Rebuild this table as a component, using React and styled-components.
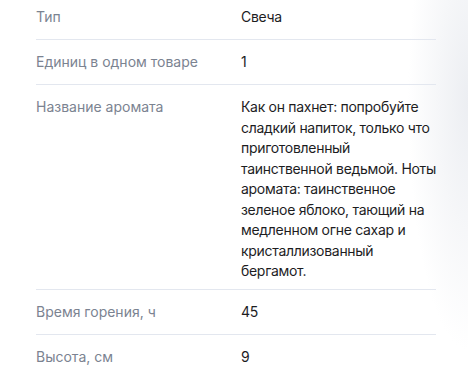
import React from 'react';
import styled, { createGlobalStyle } from 'styled-components';

const GlobalStyle = createGlobalStyle`
  html, body {
    margin: 0;
    padding: 0;
    background: #fff;
  }
  body {
    font-family: Inter, "Noto Sans", sans-serif;
    -webkit-font-smoothing: antialiased;
  }
`;

const Page = styled.div`
  position: relative;
  width: 468px;
  height: 375px;
  overflow: hidden;
  background:
    radial-gradient(ellipse 60px 250px at 100% 100px, #eceef2 0%, rgba(255, 255, 255, 0) 100%),
    #fff;
`;

const Specs = styled.dl`
  margin: -5px 0 0 36px;
  width: 400px;
`;

const Row = styled.div`
  display: grid;
  grid-template-columns: 205px 1fr;
  padding: ${({ $multi }) => ($multi ? '12px 0 7px' : '12px 0')};
  border-bottom: 1px solid #e3e7ef;
  font-size: 14px;
  line-height: ${({ $multi }) => ($multi ? '20.5px' : '20px')};

  &:last-child {
    border-bottom: none;
  }
`;

const Label = styled.dt`
  margin: 0;
  color: #7b8391;
`;

const Value = styled.dd`
  margin: 0 -4px 0 0;
  color: #1d1d1f;
  letter-spacing: -0.3px;
`;

const specs = [
  { label: 'Тип', value: 'Свеча' },
  { label: 'Единиц в одном товаре', value: '1' },
  {
    label: 'Название аромата',
    value:
      'Как он пахнет: попробуйте сладкий напиток, только что приготовленный таинственной ведьмой. Ноты аромата: таинственное зеленое яблоко, тающий на медленном огне сахар и кристаллизованный бергамот.',
    multi: true,
  },
  { label: 'Время горения, ч', value: '45' },
  { label: 'Высота, см', value: '9' },
];

const App = () => {
  return (
    <>
      <GlobalStyle />
      <Page>
        <Specs>
          {specs.map((s) => (
            <Row key={s.label} $multi={s.multi}>
              <Label>{s.label}</Label>
              <Value>{s.value}</Value>
            </Row>
          ))}
        </Specs>
      </Page>
    </>
  );
};

export default App;
